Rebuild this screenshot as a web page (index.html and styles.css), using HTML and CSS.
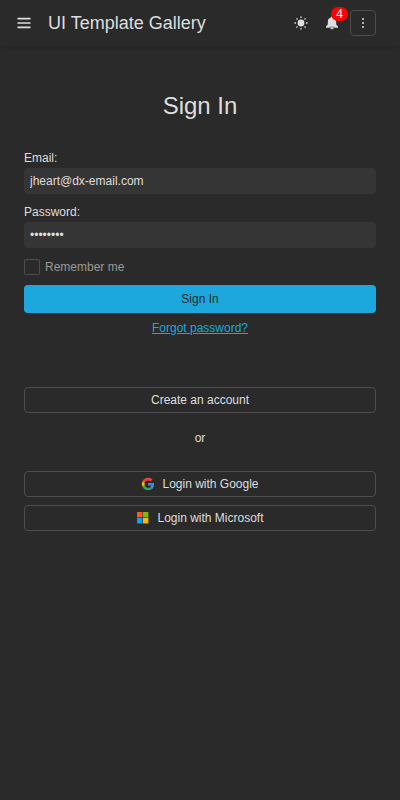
FILE: index.html
```html
<!DOCTYPE html>
<html lang="en">
<head>
<meta charset="utf-8">
<title>UI Template Gallery</title>
<link rel="stylesheet" href="styles.css">
</head>
<body>
<header class="toolbar">
  <button class="icon-button" aria-label="Menu">
    <svg width="18" height="18" viewBox="0 0 18 18"><path d="M2.500 4.600h13M2.500 9h13M2.500 13.400h13" stroke="#dedede" stroke-width="1.600" fill="none"/></svg>
  </button>
  <div class="title">UI Template Gallery</div>
  <div class="actions">
    <button class="icon-button" aria-label="Theme">
      <svg width="18" height="18" viewBox="0 0 18 18"><circle cx="9" cy="9" r="3.400" fill="#dedede"/><path d="M9 2.500v1.500M9 14v1.500M2.500 9h1.500M14 9h1.500M4.400 4.400l1.100 1.100M12.500 12.500l1.100 1.100M4.400 13.600l1.100-1.100M12.500 5.500l1.100-1.100" stroke="#dedede" stroke-width="1.300"/></svg>
    </button>
    <button class="icon-button bell" aria-label="Notifications">
      <svg width="18" height="18" viewBox="0 0 18 18"><path d="M9 2.500c.8 0 1.200.5 1.200 1.100 2 .6 3 2.200 3 4.400v2.500l1.800 2v1.200H3v-1.200l1.800-2V8c0-2.200 1-3.800 3-4.400 0-.6.4-1.100 1.200-1.100z" fill="#dedede"/><path d="M6.700 13.100h4.600a2.300 2.400 0 0 1-4.600 0z" fill="#dedede" stroke="#2a2a2a" stroke-width=".5"/></svg>
      <span class="badge">4</span>
    </button>
    <button class="icon-button outlined" aria-label="More">
      <svg width="18" height="18" viewBox="0 0 18 18"><g fill="#dedede"><circle cx="9" cy="5" r="1"/><circle cx="9" cy="9" r="1"/><circle cx="9" cy="13" r="1"/></g></svg>
    </button>
  </div>
</header>
<main class="content">
  <h1>Sign In</h1>
  <form class="form">
    <label for="email">Email:</label>
    <input id="email" class="field" type="text" value="jheart@dx-email.com">
    <label for="password">Password:</label>
    <input id="password" class="field" type="password" value="password">
    <div class="remember"><span class="checkbox"></span>Remember me</div>
    <button type="button" class="button primary">Sign In</button>
    <a class="forgot" href="#">Forgot password?</a>
    <button type="button" class="button">Create an account</button>
    <div class="or">or</div>
    <button type="button" class="button google">
      <svg width="14" height="14" viewBox="-1 -1 50 50"><path fill="#ea4335" d="M24 11.500c3.500 0 6.700 1.200 9.200 3.600l6.900-6.900C35.900 4.300 30.500 2 24 2 15.400 2 8 6.900 4.300 14.100l8 6.200C14.200 15.200 18.700 11.500 24 11.500z"/><path fill="#4285f4" d="M45.500 24.500c0-1.600-.2-3.100-.4-4.500H24v9h12.100c-.6 2.900-2.200 5.300-4.600 6.900l7.700 6c4.500-4.200 6.300-10.300 6.300-17.400z"/><path fill="#fbbc05" d="M12.300 27.700a13 13 0 0 1 0-7.400l-8-6.200a22 22 0 0 0 0 19.800z"/><path fill="#34a853" d="M24 46c6 0 11-2 15.200-4.100l-7.700-6c-2 1.400-4.500 2.200-7.500 2.200-5.300 0-9.800-4.600-11.700-10.400l-8 6.200C8 41.100 15.400 46 24 46z"/></svg>
      <span>Login with Google</span>
    </button>
    <button type="button" class="button microsoft">
      <svg width="14" height="14" viewBox="0 0 14 14"><path fill="#ff5722" d="M1 1h5.400v5.400H1z"/><path fill="#7fba00" d="M7 1h5.400v5.400H7z"/><path fill="#03a4ef" d="M1 7h5.400v5.400H1z"/><path fill="#ffb900" d="M7 7h5.400v5.400H7z"/></svg>
      <span>Login with Microsoft</span>
    </button>
  </form>
</main>
</body>
</html>
```
FILE: styles.css
```css
* { box-sizing: border-box; }
body {
  margin: 0;
  min-height: 100vh;
  background: #2a2a2a;
  color: #dedede;
  font: 12px/16px "Liberation Sans", Arial, sans-serif;
}
button, input { font: inherit; color: inherit; margin: 0; }
svg { display: block; flex: none; }
.toolbar {
  display: flex;
  align-items: center;
  height: 46px;
  padding: 0 24px 0 11px;
  box-shadow: 0 2px 4px rgba(0, 0, 0, .13);
}
.icon-button {
  position: relative;
  display: flex;
  align-items: center;
  justify-content: center;
  width: 26px;
  height: 26px;
  padding: 0;
  border: 0;
  border-radius: 4px;
  background: none;
}
.outlined { border: 1px solid #4d4d4d; }
.title {
  margin-left: 11px;
  font-size: 18px;
  line-height: 26px;
}
.actions { display: flex; gap: 5px; margin-left: auto; }
.badge {
  position: absolute;
  left: 12px;
  top: -3px;
  width: 17px;
  height: 14px;
  border-radius: 7px;
  background: #f00;
  color: #fff;
  line-height: 14px;
  text-align: center;
}
.content { padding: 46px 24px 0; }
h1 {
  margin: 0 0 30px;
  font-size: 24px;
  font-weight: 400;
  line-height: 28px;
  text-align: center;
}
.form { display: flex; flex-direction: column; }
.form label { height: 18px; }
.field {
  width: 100%;
  height: 26px;
  margin-bottom: 10px;
  padding: 0 6px;
  border: 0;
  border-radius: 4px;
  background: #353535;
  outline: 0;
}
.remember {
  display: flex;
  align-items: center;
  gap: 5px;
  margin: 1px 0 10px;
  color: #999;
}
.checkbox {
  width: 16px;
  height: 16px;
  border: 1px solid #4d4d4d;
  border-radius: 2px;
}
.button {
  display: flex;
  align-items: center;
  justify-content: center;
  height: 26px;
  padding: 0;
  border: 1px solid #4d4d4d;
  border-radius: 4px;
  background: none;
}
.primary {
  height: 28px;
  border: 0;
  background: #1ca8dd;
  color: #2a2a2a;
}
.forgot {
  align-self: center;
  margin: 7px 0 51px;
  color: #1ca8dd;
}
.or { margin: 17px 0 25px; text-align: center; }
.google { gap: 7px; margin-bottom: 8px; }
.microsoft { gap: 7px; }
```
